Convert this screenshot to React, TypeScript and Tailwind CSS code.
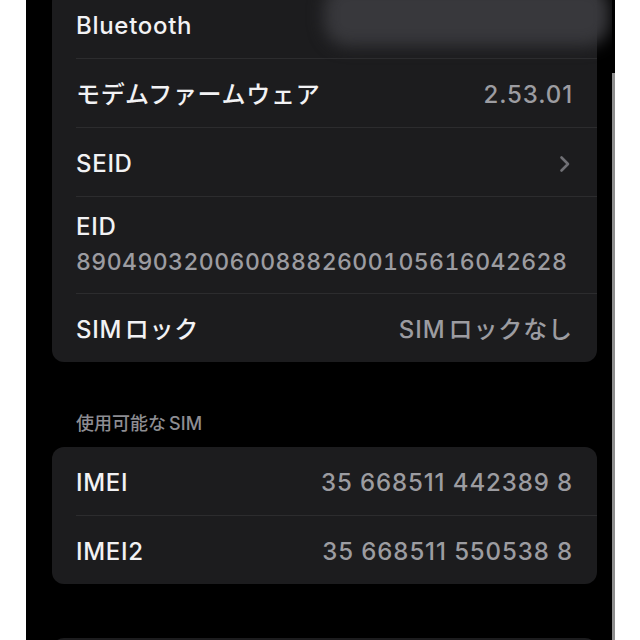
import React from "react";

const font = { fontFamily: 'Inter, "Noto Sans CJK JP", sans-serif' };

function Sep() {
  return <div className="ml-[24px] h-px bg-[#2c2c2e]" />;
}

function Row({ label, value, chevron }: { label: string; value?: string; chevron?: boolean }) {
  return (
    <div className="h-[68px] flex items-center justify-between pl-[24px] pr-[25px] pt-[4px]">
      <span className="text-[24px] leading-[28px] font-medium tracking-[0.7px] text-[#f2f2f4]">{label}</span>
      {value && (
        <span className="text-[24px] leading-[28px] font-medium tracking-[0.9px] -mr-[1px] text-[#9c9ca1]">{value}</span>
      )}
      {chevron && (
        <svg width="12" height="18" viewBox="0 0 12 18" className="mr-[1px]">
          <path d="M2.5 2.5 L9 9 L2.5 15.5" fill="none" stroke="#707075" strokeWidth="2.6" strokeLinecap="round" strokeLinejoin="round" />
        </svg>
      )}
    </div>
  );
}

export default function App() {
  return (
    <div className="w-[640px] h-[640px] overflow-hidden bg-white flex" style={font}>
      <div className="w-[26px] shrink-0 bg-white" />
      <div className="w-[586px] shrink-0 bg-black relative overflow-hidden pl-[26px] pr-[15px]">
        <div className="-mt-[10px] rounded-[12px] bg-[#1c1c1e]">
          <Row label="Bluetooth" />
          <Sep />
          <Row label="モデムファームウェア" value="2.53.01" />
          <Sep />
          <Row label="SEID" chevron />
          <Sep />
          <div className="h-[96px] pl-[24px] pr-[25px] pt-[16px] flex flex-col">
            <span className="text-[24px] leading-[28px] font-medium tracking-[0.7px] text-[#f2f2f4]">EID</span>
            <span className="mt-[7px] text-[23px] leading-[28px] font-medium text-[#9c9ca1] tabular-nums tracking-[0.45px]">
              89049032006008882600105616042628
            </span>
          </div>
          <Sep />
          <Row label={"SIM\u200Aロック"} value={"SIM\u200Aロックなし"} />
        </div>
        <div className="mt-[52px] pl-[24px] text-[18px] leading-[20px] font-medium text-[#8d8d92]">
          {"使用可能な\u2009SIM"}
        </div>
        <div className="mt-[13px] rounded-[12px] bg-[#1c1c1e]">
          <Row label="IMEI" value="35 668511 442389 8" />
          <Sep />
          <Row label="IMEI2" value="35 668511 550538 8" />
        </div>
        <div className="mt-[54px] h-[80px] rounded-[12px] bg-[#1c1c1e]" />
        <div className="absolute left-[298px] top-[-16px] w-[286px] h-[62px] rounded-[24px] bg-[#38383c] blur-[8px]" />
      </div>
      <div className="w-[3px] shrink-0 flex flex-col">
        <div className="h-[73px] bg-black" />
        <div className="flex-1 bg-[#8e8e8e]" />
      </div>
      <div className="flex-1 bg-white" />
    </div>
  );
}
